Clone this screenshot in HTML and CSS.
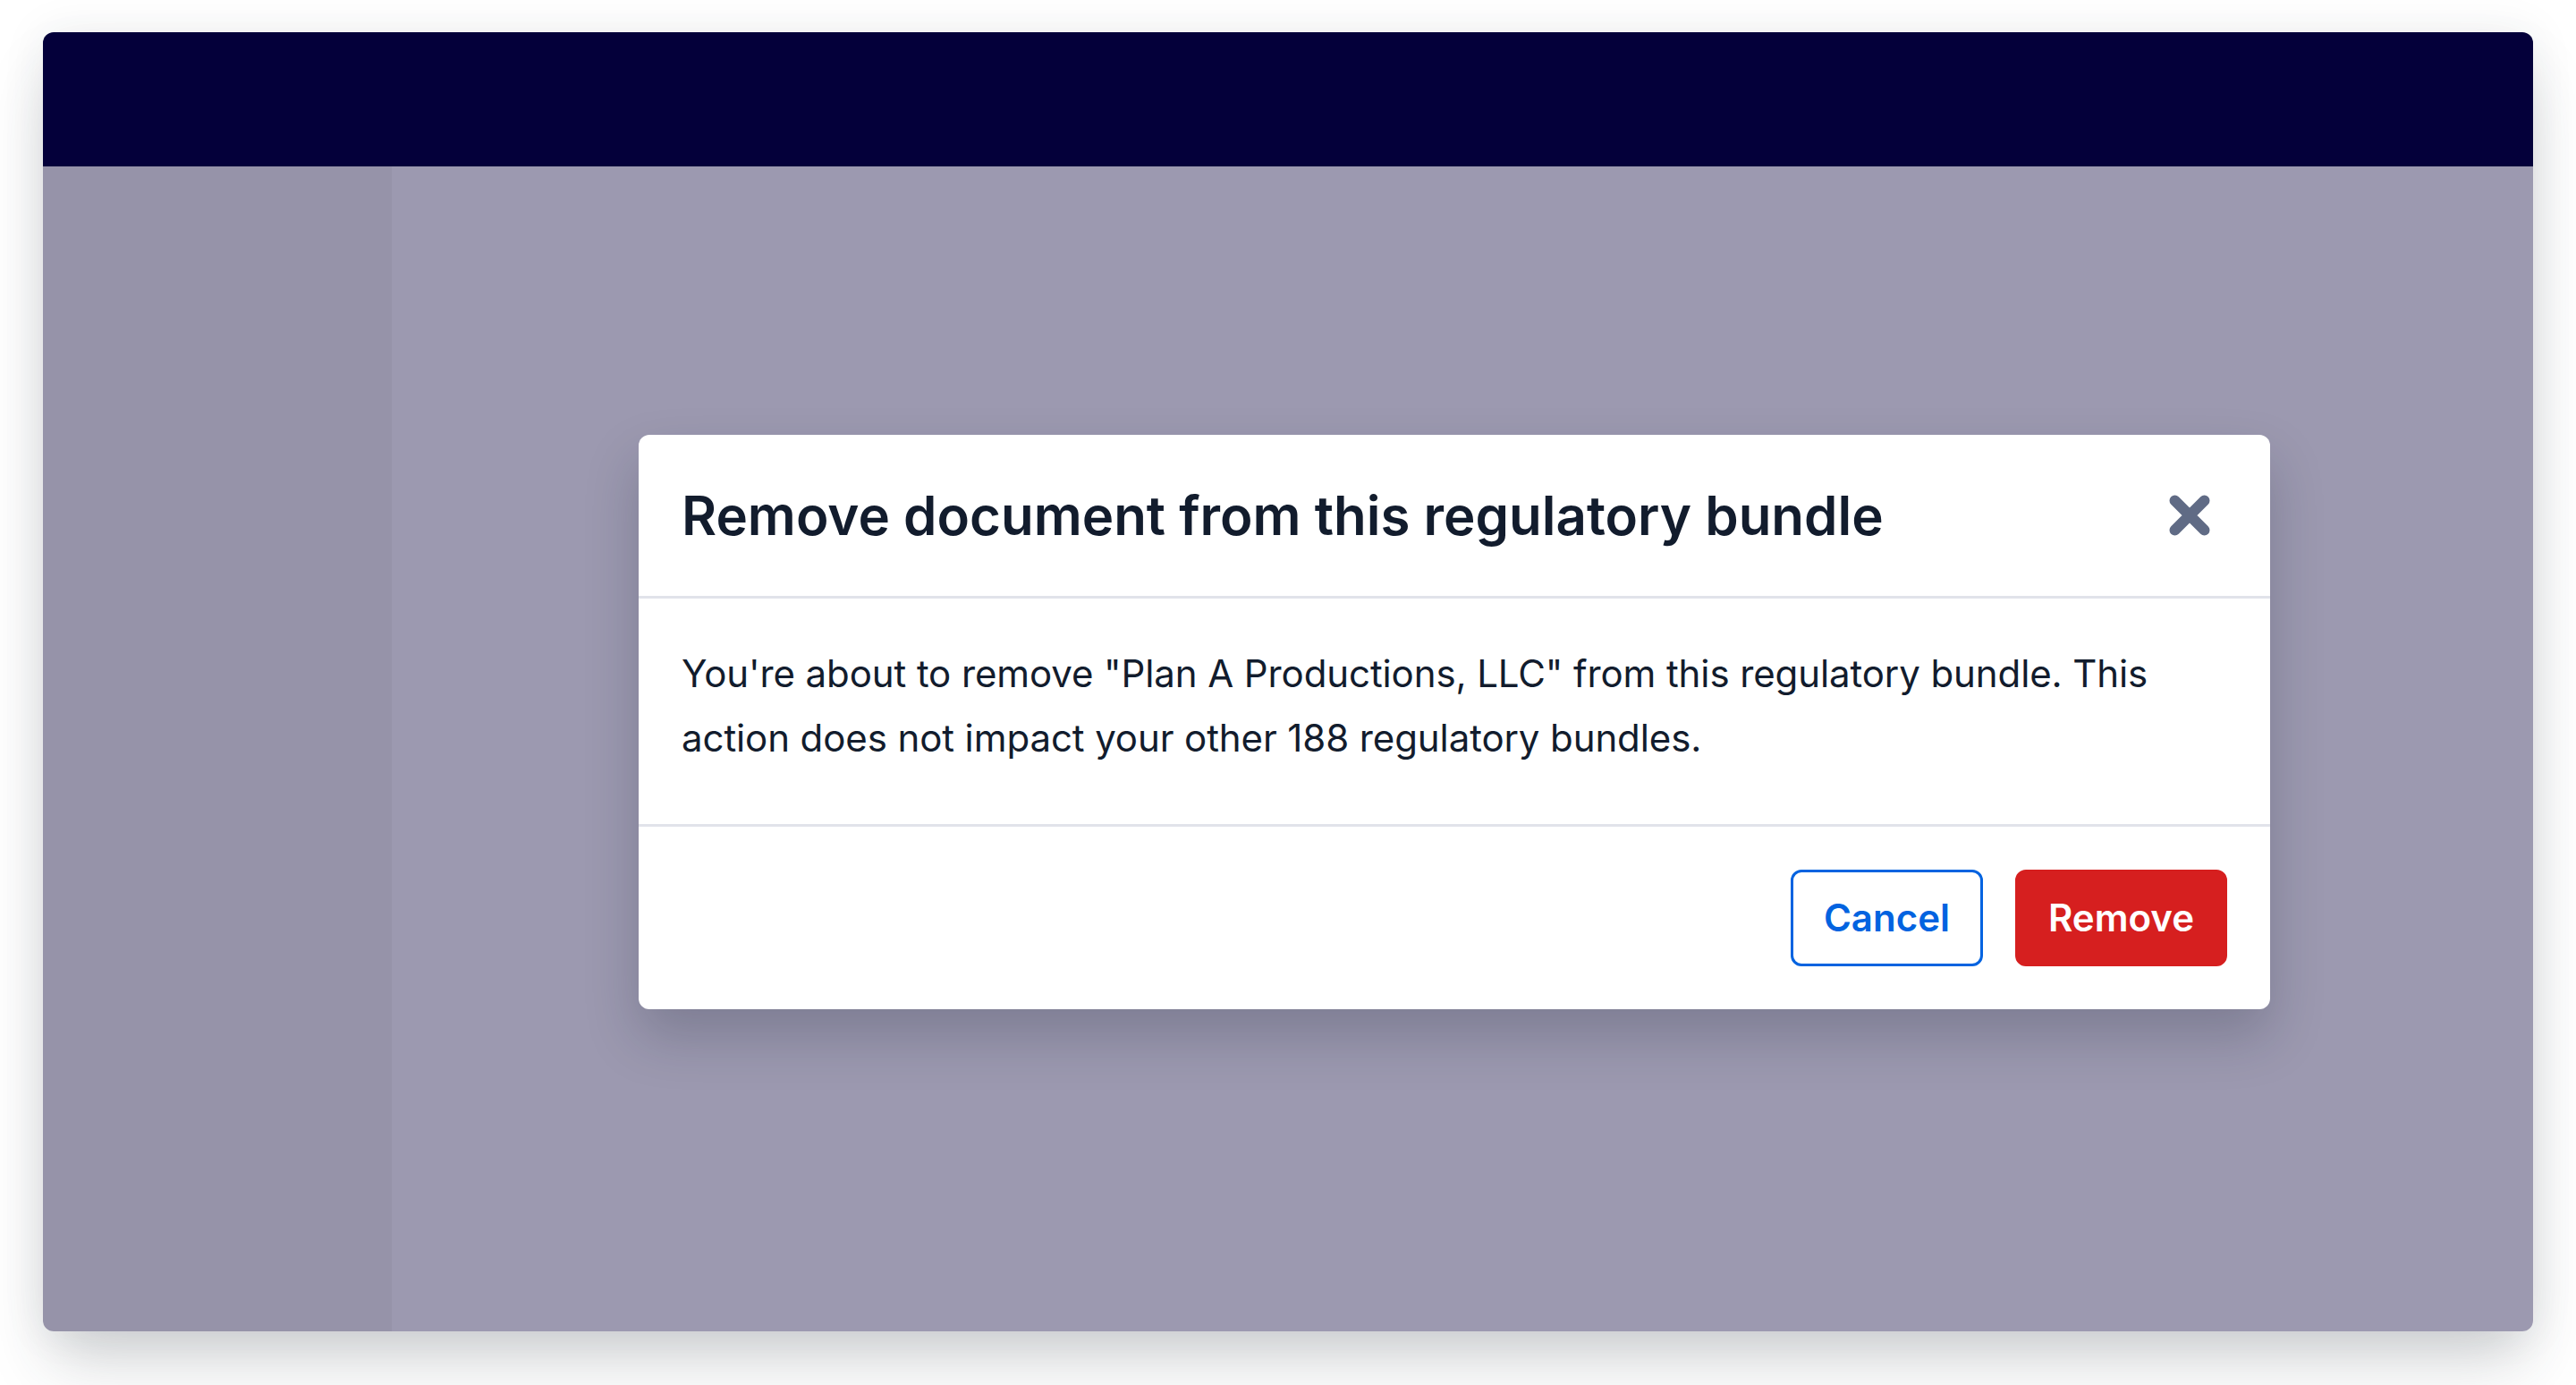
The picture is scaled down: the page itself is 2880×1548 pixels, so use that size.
FILE: index.html
```html
<!DOCTYPE html>
<html lang="en">
<head>
<meta charset="utf-8">
<title>Remove document</title>
<link rel="stylesheet" href="styles.css">
</head>
<body>
<div class="frame">
  <header class="topbar"></header>
  <div class="app">
    <aside class="sidebar"></aside>
    <main class="main">
      <section class="modal" role="dialog" aria-labelledby="modal-title">
        <div class="modal-header">
          <h2 id="modal-title" class="modal-title">Remove document from this regulatory bundle</h2>
          <button class="close-btn" type="button" aria-label="Close">
            <svg class="close-icon" viewBox="0 0 60 60" width="60" height="60" aria-hidden="true">
              <path d="M13.5 13.5 L46.5 46.5 M46.5 13.5 L13.5 46.5" stroke="#606b85" stroke-width="12" stroke-linecap="round" fill="none"/>
            </svg>
          </button>
        </div>
        <div class="modal-body">
          <p>You're about to remove "Plan A Productions, LLC" from this regulatory bundle. This action does not impact your other 188 regulatory bundles.</p>
        </div>
        <div class="modal-footer">
          <button class="btn btn-secondary" type="button">Cancel</button>
          <button class="btn btn-destructive" type="button">Remove</button>
        </div>
      </section>
    </main>
  </div>
</div>
</body>
</html>
```
FILE: styles.css
```css
* { box-sizing: border-box; }

html, body {
  margin: 0;
  padding: 0;
  background: #ffffff;
}

body {
  width: 2880px;
  height: 1548px;
  padding: 36px 48px 60px;
  font-family: Inter, "Noto Sans", "Liberation Sans", sans-serif;
  color: #121c2d;
  overflow: hidden;
}

.frame {
  width: 2784px;
  height: 1452px;
  border-radius: 12px;
  overflow: hidden;
  display: flex;
  flex-direction: column;
  box-shadow: 0 40px 70px -10px rgba(40, 48, 60, 0.22), 0 0 50px rgba(40, 48, 60, 0.08);
}

.topbar {
  height: 150px;
  flex: 0 0 150px;
  background: #04003a;
}

.app {
  flex: 1;
  display: flex;
  min-height: 0;
}

.sidebar {
  width: 390px;
  flex: 0 0 390px;
  background: #9693a9;
}

.main {
  flex: 1;
  background: #9c99b0;
  display: flex;
  justify-content: center;
  align-items: flex-start;
  padding: 300px 18px 0 0;
}

.modal {
  width: 1824px;
  background: #ffffff;
  border-radius: 12px;
  box-shadow: 0 30px 60px rgba(18, 28, 45, 0.22);
  overflow: hidden;
}

.modal-header {
  display: flex;
  align-items: center;
  justify-content: space-between;
  padding: 48px 48px 48px 48px;
  height: 183px;
  border-bottom: 3px solid #e1e3ea;
}

.modal-title {
  margin: 0;
  font-size: 60px;
  line-height: 84px;
  font-weight: 600;
  color: #121c2d;
  letter-spacing: 0;
}

.close-btn {
  display: flex;
  align-items: center;
  justify-content: center;
  padding: 12px;
  margin: 0;
  border: 0;
  background: transparent;
  cursor: pointer;
}

.close-icon {
  display: block;
  width: 60px;
  height: 60px;
}

.modal-body {
  padding: 48px 48px 60px;
  border-bottom: 3px solid #e1e3ea;
}

.modal-body p {
  margin: 0;
  font-size: 42px;
  line-height: 72px;
  font-weight: 400;
  letter-spacing: -0.1px;
  color: #121c2d;
}

.modal-footer {
  display: flex;
  justify-content: flex-end;
  align-items: center;
  gap: 36px;
  padding: 48px;
}

.btn {
  font-family: Inter, "Noto Sans", "Liberation Sans", sans-serif;
  font-size: 42px;
  line-height: 60px;
  font-weight: 600;
  height: 108px;
  padding: 21px 34px;
  border-radius: 12px;
  cursor: pointer;
}

.btn-secondary {
  background: #ffffff;
  color: #0263e0;
  border: 3px solid #0263e0;
}

.btn-destructive {
  background: #d61f1f;
  color: #ffffff;
  border: 3px solid #d61f1f;
}
```
